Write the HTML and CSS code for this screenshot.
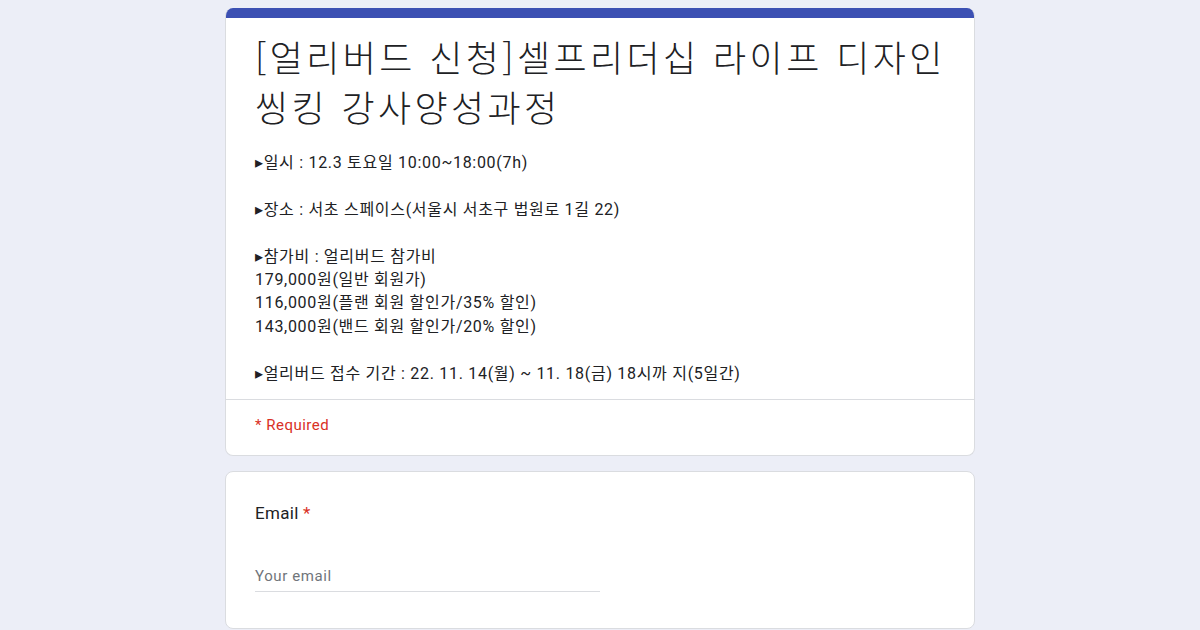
FILE: index.html
```html
<!DOCTYPE html>
<html lang="ko">
<head>
    <meta charset="UTF-8">
    <meta name="viewport" content="width=device-width, initial-scale=1.0">
    <title>[얼리버드 신청]셀프리더십 라이프 디자인 씽킹 강사양성과정</title>
    <link rel="stylesheet" href="styles.css">
</head>
<body>
    <div class="form-container">
        <!-- Form header card -->
        <div class="card header-card">
            <div class="header-bar"></div>
            <div class="header-body">
                <h1 class="form-title">[얼리버드 신청]셀프리더십 라이프 디자인 씽킹 강사양성과정</h1>
                <div class="form-desc">
                    <p>▸일시 : 12.3 토요일 10:00~18:00(7h)</p>
                    <p class="blank"></p>
                    <p>▸장소 : 서초 스페이스(서울시 서초구 법원로 1길 22)</p>
                    <p class="blank"></p>
                    <p>▸참가비 : 얼리버드 참가비</p>
                    <p>179,000원(일반 회원가)</p>
                    <p>116,000원(플랜 회원 할인가/35% 할인)</p>
                    <p>143,000원(밴드 회원 할인가/20% 할인)</p>
                    <p class="blank"></p>
                    <p>▸얼리버드 접수 기간 : 22. 11. 14(월) ~ 11. 18(금) 18시까 지(5일간)</p>
                </div>
            </div>
            <div class="required-note">* Required</div>
        </div>

        <!-- Email question -->
        <div class="card question-card">
            <div class="question-title">Email <span class="asterisk">*</span></div>
            <div class="text-input">
                <span class="placeholder">Your email</span>
            </div>
        </div>
    </div>
</body>
</html>
```

FILE: styles.css
```css
body {
    margin: 0;
    padding: 0;
    background-color: #eceef7;
    font-family: Roboto, "Noto Sans CJK KR", Arial, sans-serif;
    color: #202124;
}

.form-container {
    width: 750px;
    margin: 0 auto;
    padding-top: 8px;
    display: flex;
    flex-direction: column;
    gap: 15px;
}

.card {
    background-color: #fff;
    border: 1px solid #dadce0;
    border-radius: 8px;
    overflow: hidden;
}

.header-card {
    border-top: none;
}

.header-bar {
    height: 10px;
    background-color: #3c50b3;
}

.header-body {
    padding: 13px 20px 14px 29px;
    border-bottom: 1px solid #dadce0;
}

.form-title {
    margin: 0;
    font-family: "Noto Sans CJK KR", sans-serif;
    font-size: 36px;
    font-weight: 300;
    line-height: 50px;
    letter-spacing: 3.4px;
    color: #202124;
}

.form-desc {
    margin-top: 20px;
    font-size: 16px;
    line-height: 23.4px;
    letter-spacing: 0.7px;
}

.form-desc p {
    margin: 0;
}

.form-desc .blank {
    height: 23.4px;
}

.required-note {
    padding: 15px 29px 20px;
    font-size: 15px;
    line-height: 20px;
    letter-spacing: 0.5px;
    color: #d93025;
}

.question-card {
    padding: 29px 29px 36px;
}

.question-title {
    font-size: 17px;
    line-height: 24px;
    letter-spacing: 0.3px;
    color: #202124;
}

.asterisk {
    color: #d93025;
}

.text-input {
    width: 345px;
    margin-top: 41px;
    padding-bottom: 5px;
    border-bottom: 1px solid #dadce0;
}

.placeholder {
    font-size: 15px;
    line-height: 20px;
    letter-spacing: 0.6px;
    color: #70757a;
}
```
